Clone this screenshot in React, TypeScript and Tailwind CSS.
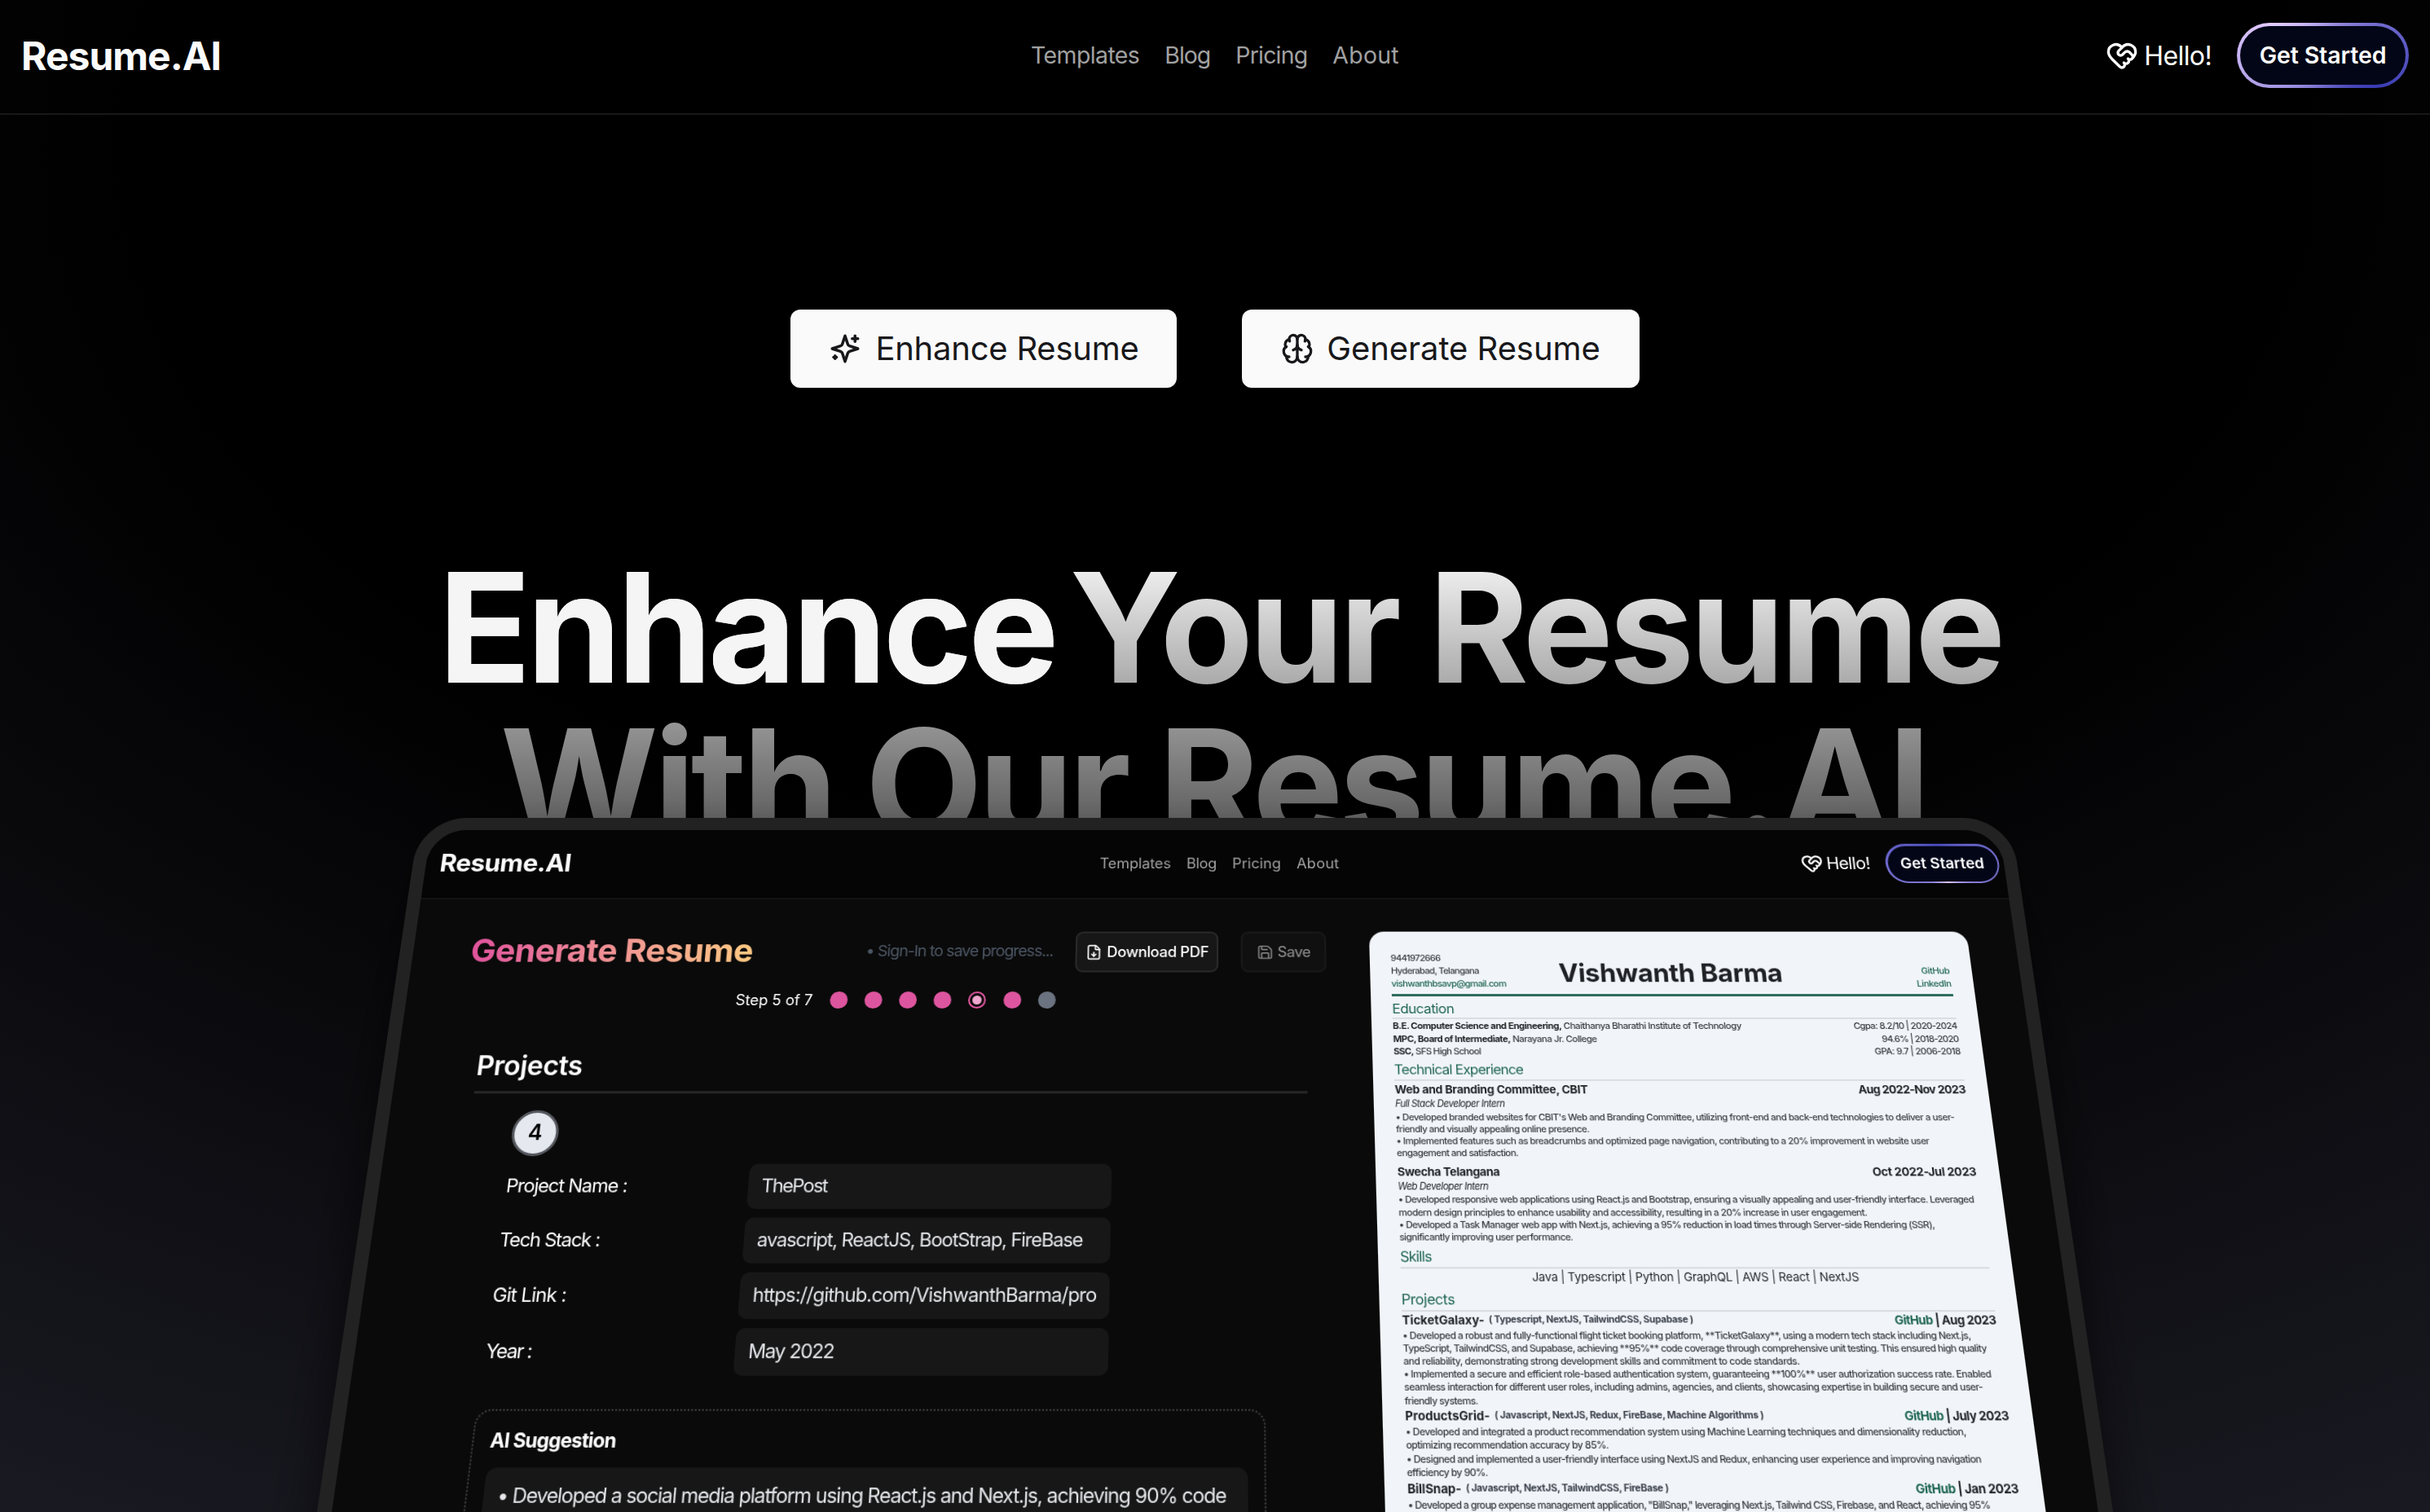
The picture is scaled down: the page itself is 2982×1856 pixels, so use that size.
import { useLayoutEffect, useRef, useState, type ReactNode } from "react";
import { Brain, FileDown, HeartHandshake, Save } from "lucide-react";

/** Single-line text whose tracking is adjusted so that it spans `w` pixels. */
function Fit({ w, className = "", children }: { w: number; className?: string; children: ReactNode }) {
  const ref = useRef<HTMLSpanElement>(null);
  const [spacing, setSpacing] = useState(0);
  useLayoutEffect(() => {
    const el = ref.current;
    if (!el) return;
    el.style.letterSpacing = "0px";
    const chars = (el.textContent ?? "").length;
    setSpacing((w - el.offsetWidth) / Math.max(chars - 1, 1));
    el.style.letterSpacing = "";
  }, [w]);
  return (
    <span ref={ref} className={`inline-block whitespace-pre ${className}`} style={{ letterSpacing: `${spacing}px` }}>
      {children}
    </span>
  );
}

function Sparkles({ className }: { className: string }) {
  return (
    <svg viewBox="0 0 24 24" fill="none" stroke="currentColor" strokeWidth="2" strokeLinecap="round" strokeLinejoin="round" className={className}>
      <path d="m12 3-1.912 5.813a2 2 0 0 1-1.275 1.275L3 12l5.813 1.912a2 2 0 0 1 1.275 1.275L12 21l1.912-5.813a2 2 0 0 1 1.275-1.275L21 12l-5.813-1.912a2 2 0 0 1-1.275-1.275L12 3Z" />
      <path d="M5 17v2" />
      <path d="M19 3v4" />
      <path d="M6 18H4" />
      <path d="M17 5h4" />
    </svg>
  );
}

function SiteHeader() {
  return (
    <header className="flex h-[141px] items-center border-b-2 border-[#18181a] pr-[26px] pb-[3px] pl-[26px]">
      <div className="flex flex-1 pt-px">
        <Fit w={246} className="text-[48px] font-bold text-neutral-50">Resume.AI</Fit>
      </div>
      <nav className="flex gap-[31px] pt-px text-[28.5px] text-[#a1a1a1]">
        <Fit w={134}>Templates</Fit>
        <Fit w={57}>Blog</Fit>
        <Fit w={89}>Pricing</Fit>
        <Fit w={81}>About</Fit>
      </nav>
      <div className="flex flex-1 items-center justify-end text-white">
        <HeartHandshake className="mr-[7px] size-10" strokeWidth={2} />
        <Fit w={83} className="mr-[31px] pt-[2px] text-[32px]">Hello!</Fit>
        <div className="flex h-20 w-[211px] rounded-full bg-[conic-gradient(from_301deg,#E2CBFF_0%,#393BB2_50%,#E2CBFF_100%)] p-1">
          <div className="flex flex-1 items-center justify-center rounded-full bg-[#020617]">
            <Fit w={156} className="text-[28.5px] font-semibold">Get Started</Fit>
          </div>
        </div>
      </div>
    </header>
  );
}

function MiniHeader() {
  return (
    <div className="flex h-[90px] items-center border-b-2 border-[#131313] bg-[#050505] pr-[6px] pb-px pl-[17px]">
      <div className="flex flex-1">
        <Fit w={160} className="text-[31px] font-bold text-neutral-50">Resume.AI</Fit>
      </div>
      <nav className="flex gap-[19px] text-[18px] text-[#a1a1a1]">
        <Fit w={87}>Templates</Fit>
        <Fit w={37}>Blog</Fit>
        <Fit w={59}>Pricing</Fit>
        <Fit w={52}>About</Fit>
      </nav>
      <div className="flex flex-1 items-center justify-end text-white">
        <HeartHandshake className="mr-[4px] size-[27px]" strokeWidth={2} />
        <Fit w={54} className="mr-[19px] text-[21px]">Hello!</Fit>
        <div className="flex h-[51px] w-[138px] rounded-full bg-[conic-gradient(from_170deg,#E2CBFF_0%,#8a80dc_12%,#4a4cc2_50%,#8a80dc_88%,#E2CBFF_100%)] p-[2.5px]">
          <div className="flex flex-1 items-center justify-center rounded-full bg-[#020617]">
            <Fit w={102} className="text-[18.5px] font-semibold">Get Started</Fit>
          </div>
        </div>
      </div>
    </div>
  );
}

const fields: { label: string; lw: number; value: string; vw: number }[] = [
  { label: "Project Name :", lw: 140, value: "ThePost", vw: 77 },
  { label: "Tech Stack :", lw: 115, value: "avascript, ReactJS, BootStrap, FireBase", vw: 371 },
  { label: "Git Link :", lw: 84, value: "https://github.com/VishwanthBarma/pro", vw: 388 },
  { label: "Year :", lw: 52, value: "May 2022", vw: 97 },
];

const steps = ["done", "done", "done", "done", "current", "done", "todo"];

function Editor() {
  return (
    <div className="w-[1145px] pt-[41px] pl-[69px] text-white">
      <div className="flex h-[51px] w-[1024px] items-center justify-between">
        <Fit w={338} className="bg-linear-to-r from-[#e0529c] to-[#fcc981] bg-clip-text pb-[3px] text-[40px] leading-[48px] font-bold text-transparent">
          Generate Resume
        </Fit>
        <div className="flex items-center gap-[27px]">
          <Fit w={225} className="text-[19px] text-[#4b5563]">• Sign-In to save progress...</Fit>
          <div className="flex h-[51px] w-[171px] items-center justify-center gap-[6px] rounded-[9px] border-2 border-[#2a2a2a] bg-[#171717]">
            <FileDown className="size-5" strokeWidth={2} />
            <Fit w={122} className="text-[18px] font-medium">Download PDF</Fit>
          </div>
          <div className="flex h-[51px] w-[102px] items-center justify-center gap-[5px] rounded-[9px] border-2 border-[#191919] bg-[#101010] text-[#828282]">
            <Save className="size-5" strokeWidth={2} />
            <Fit w={40} className="text-[18px] font-medium">Save</Fit>
          </div>
        </div>
      </div>

      <div className="mt-[19px] flex h-[30px] items-center gap-[20.2px] pl-[322px]">
        <Fit w={92} className="text-[18px]">Step 5 of 7</Fit>
        {steps.map((s, i) =>
          s === "current" ? (
            <div key={i} className="flex size-[21px] items-center justify-center rounded-full border-[2.5px] border-[#de559f]">
              <div className="size-[11px] rounded-full bg-[#f0a8d0]" />
            </div>
          ) : (
            <div key={i} className={s === "done" ? "size-[21px] rounded-full bg-[#de559f]" : "size-[21px] rounded-full bg-[#6b7280]"} />
          ),
        )}
      </div>

      <div className="mt-[46px] ml-[25px] h-10">
        <Fit w={125} className="text-[32px] leading-10 font-semibold">Projects</Fit>
      </div>
      <div className="mt-[10px] ml-[26px] h-[3px] w-[973px] bg-[#262626]" />

      <div className="mt-[20px] ml-[76px] flex size-[54px] items-center justify-center rounded-full border-3 border-[#55585e] bg-[#e5e9ef] text-[25px] font-semibold text-black">
        4
      </div>

      <div className="mt-[8.5px] ml-[77px] flex flex-col gap-[10.1px]">
        {fields.map((f) => (
          <div key={f.label} className="flex h-[52px] items-center text-[22px]">
            <div className="w-[278px]">
              <Fit w={f.lw}>{f.label}</Fit>
            </div>
            <div className="flex h-[52px] w-[417px] items-center rounded-[10px] bg-[#171717] pl-[15px] text-[#e5e7eb]">
              <Fit w={f.vw}>{f.value}</Fit>
            </div>
          </div>
        ))}
      </div>

      <div className="mt-[36px] ml-[74px] h-60 w-[873px] rounded-[18px] border-2 border-dotted border-[#3a3a3a] px-[18px] pt-[11px]">
        <Fit w={139} className="text-[21.5px] leading-10 font-bold">AI Suggestion</Fit>
        <div className="mt-[9px] h-40 rounded-[12px] bg-[#171717] pt-[9px] pl-[15px]">
          <Fit w={795} className="text-[22px] leading-10 text-[#e5e7eb]">
            • Developed a social media platform using React.js and Next.js, achieving 90% code
          </Fit>
        </div>
      </div>
    </div>
  );
}

function SectionTitle({ w, className, children }: { w: number; className: string; children: ReactNode }) {
  return (
    <div className={`flex items-center border-b-2 border-[#dadde1] text-[16.5px] text-[#1d6450] ${className}`}>
      <Fit w={w}>{children}</Fit>
    </div>
  );
}

function Split({ className = "", left, right }: { className?: string; left: ReactNode; right: ReactNode }) {
  return (
    <div className={`flex items-center justify-between ${className}`}>
      <div>{left}</div>
      <div>{right}</div>
    </div>
  );
}

function Body({ leading, lines }: { leading: string; lines: [number, string][] }) {
  return (
    <div className={`flex flex-col items-start text-[11px] font-medium text-[#36393d] ${leading}`}>
      {lines.map(([w, t]) => (
        <Fit key={t} w={w}>{t}</Fit>
      ))}
    </div>
  );
}

function ProjectRow({ name, nw, tech, tw, date, dw }: { name: string; nw: number; tech: string; tw: number; date: string; dw: number }) {
  return (
    <Split
      className="h-[19.2px] text-[13.5px] font-bold"
      left={
        <div className="flex items-center gap-[5px]">
          <Fit w={nw}>{name}</Fit>
          <Fit w={tw} className="text-[10.8px] text-[#3a3f4a]">{tech}</Fit>
        </div>
      }
      right={
        <Fit w={dw}>
          <span className="text-[#1d6450]">GitHub</span> | {date}
        </Fit>
      }
    />
  );
}

function Paper() {
  return (
    <div className="mt-[40.5px] h-[900px] w-[718px] rounded-[18px] bg-[#f1f5f9] pr-[26.5px] pl-[25px] text-[#1f2124]">
      <div className="grid h-[81px] grid-cols-[1fr_auto_1fr] border-b-3 border-[#2b6a5b] pt-[26.5px] text-[11px] leading-[15.9px]">
        <div className="flex flex-col items-start font-medium text-[#36393d]">
          <Fit w={60}>9441972666</Fit>
          <Fit w={106}>Hyderabad, Telangana</Fit>
          <Fit w={137} className="text-[#1d6450]">vishwanthbsavp@gmail.com</Fit>
        </div>
        <Fit w={267} className="pt-[6px] text-[31.5px] leading-[40px] font-bold">Vishwanth Barma</Fit>
        <div className="flex flex-col items-end pt-[15.9px] font-medium text-[#1d6450]">
          <Fit w={34}>GitHub</Fit>
          <Fit w={41}>LinkedIn</Fit>
        </div>
      </div>

      <SectionTitle w={74} className="h-[28.3px] pt-[4.5px]">Education</SectionTitle>
      <div className="pt-[1px] text-[11px] font-medium text-[#36393d]">
        <Split
          className="h-[15.4px]"
          left={<Fit w={412}><b className="text-[#1f2124]">B.E. Computer Science and Engineering,</b> Chaithanya Bharathi Institute of Technology</Fit>}
          right={<Fit w={123}>Cgpa: 8.2/10 | 2020-2024</Fit>}
        />
        <Split
          className="h-[15.4px]"
          left={<Fit w={241}><b className="text-[#1f2124]">MPC, Board of Intermediate,</b> Narayana Jr. College</Fit>}
          right={<Fit w={91}>94.6% | 2018-2020</Fit>}
        />
        <Split
          className="h-[15.4px]"
          left={<Fit w={103}><b className="text-[#1f2124]">SSC,</b> SFS High School</Fit>}
          right={<Fit w={101}>GPA: 9.7 | 2006-2018</Fit>}
        />
      </div>

      <SectionTitle w={152} className="h-[28.4px] pt-[3.4px]">Technical Experience</SectionTitle>
      <Split
        className="h-[19px] text-[13.5px] font-bold"
        left={<Fit w={226}>Web and Branding Committee, CBIT</Fit>}
        right={<Fit w={126}>Aug 2022-Nov 2023</Fit>}
      />
      <div className="flex h-[16.4px] items-center text-[11.2px] italic">
        <Fit w={128}>Full Stack Developer Intern</Fit>
      </div>
      <Body
        leading="leading-[14.15px]"
        lines={[
          [650, "• Developed branded websites for CBIT's Web and Branding Committee, utilizing front-end and back-end technologies to deliver a user-"],
          [225, "friendly and visually appealing online presence."],
          [617, "• Implemented features such as breadcrumbs and optimized page navigation, contributing to a 20% improvement in website user"],
          [141, "engagement and satisfaction."],
        ]}
      />
      <Split
        className="mt-[5px] h-[19px] text-[13.5px] font-bold"
        left={<Fit w={118}>Swecha Telangana</Fit>}
        right={<Fit w={120}>Oct 2022-Jul 2023</Fit>}
      />
      <div className="flex h-4 items-center text-[11.2px] italic">
        <Fit w={104}>Web Developer Intern</Fit>
      </div>
      <Body
        leading="leading-[14.3px]"
        lines={[
          [660, "• Developed responsive web applications using React.js and Bootstrap, ensuring a visually appealing and user-friendly interface. Leveraged"],
          [536, "modern design principles to enhance usability and accessibility, resulting in a 20% increase in user engagement."],
          [611, "• Developed a Task Manager web app with Next.js, achieving a 95% reduction in load times through Server-side Rendering (SSR),"],
          [198, "significantly improving user performance."],
        ]}
      />

      <SectionTitle w={36} className="h-[28.2px] pt-[3.6px]">Skills</SectionTitle>
      <div className="flex h-[18px] items-center justify-center text-[13.4px]">
        <Fit w={370}>Java | Typescript | Python | GraphQL | AWS | React | NextJS</Fit>
      </div>

      <SectionTitle w={60} className="h-[29.8px] pt-[5.6px]">Projects</SectionTitle>
      <ProjectRow name="TicketGalaxy-" nw={92} tech="( Typescript, NextJS, TailwindCSS, Supabase )" tw={230} date="Aug 2023" dw={114} />
      <Body
        leading="leading-[14.16px]"
        lines={[
          [636, "• Developed a robust and fully-functional flight ticket booking platform, **TicketGalaxy**, using a modern tech stack including Next.js,"],
          [652, "TypeScript, TailwindCSS, and Supabase, achieving **95%** code coverage through comprehensive unit testing. This ensured high quality"],
          [442, "and reliability, demonstrating strong development skills and commitment to code standards."],
          [653, "• Implemented a secure and efficient role-based authentication system, guaranteeing **100%** user authorization success rate. Enabled"],
          [642, "seamless interaction for different user roles, including admins, agencies, and clients, showcasing expertise in building secure and user-"],
          [82, "friendly systems."],
        ]}
      />
      <ProjectRow name="ProductsGrid-" nw={94} tech="( Javascript, NextJS, Redux, FireBase, Machine Algorithms )" tw={298} date="July 2023" dw={115} />
      <Body
        leading="leading-[14.4px]"
        lines={[
          [618, "• Developed and integrated a product recommendation system using Machine Learning techniques and dimensionality reduction,"],
          [223, "optimizing recommendation accuracy by 85%."],
          [630, "• Designed and implemented a user-friendly interface using NextJS and Redux, enhancing user experience and improving navigation"],
          [89, "efficiency by 90%."],
        ]}
      />
      <ProjectRow name="BillSnap-" nw={59} tech="( Javascript, NextJS, TailwindCSS, FireBase )" tw={222} date="Jan 2023" dw={112} />
      <Body
        leading="leading-[14.4px]"
        lines={[
          [634, "• Developed a group expense management application, \"BillSnap,\" leveraging Next.js, Tailwind CSS, Firebase, and React, achieving 95%"],
        ]}
      />
    </div>
  );
}

export default function App() {
  return (
    <div className="relative h-[1856px] w-[2982px] overflow-hidden bg-[radial-gradient(125%_125%_at_50%_10%,#000_36%,#23232f_100%)] font-['Inter',sans-serif]">
      <SiteHeader />

      <div className="mt-[239px] flex justify-center gap-20 text-[40px] text-[#18181b]">
        <div className="flex h-24 w-[474px] items-center justify-center gap-4 rounded-xl bg-neutral-50">
          <Sparkles className="size-[42px]" />
          <Fit w={323}>Enhance Resume</Fit>
        </div>
        <div className="flex h-24 w-[488px] items-center justify-center gap-4 rounded-xl bg-neutral-50">
          <Brain className="size-10" strokeWidth={2} />
          <Fit w={336}>Generate Resume</Fit>
        </div>
      </div>

      <h1 className="mt-[198px] flex h-[330px] flex-col items-center bg-linear-to-b from-[#fafafa] to-[#626262] bg-clip-text text-[187px] leading-[192px] font-[680] text-transparent">
        <span className="flex gap-[18px] pl-[12px]">
          <Fit w={762} className="text-[#f5f5f5]">Enhance</Fit>
          <Fit w={1149}>Your Resume</Fit>
        </span>
        <span className="pr-[4px]">
          <Fit w={1756}>With Our Resume.AI</Fit>
        </span>
      </h1>

      <div className="mx-auto h-[1100px] w-[1952px] origin-top rounded-[58px] bg-[#222222] p-4 shadow-[0_18px_40px_#0000004a,0_74px_74px_#00000042,0_168px_100px_#00000026] [transform:matrix3d(1,0,0,0,0,0.93,0,-0.0001409,0,0,1,0,0,0,0,1)]">
        <div className="h-full overflow-hidden rounded-[44px] bg-[#0a0a0a]">
          <MiniHeader />
          <div className="flex items-start">
            <Editor />
            <Paper />
          </div>
        </div>
      </div>
    </div>
  );
}
